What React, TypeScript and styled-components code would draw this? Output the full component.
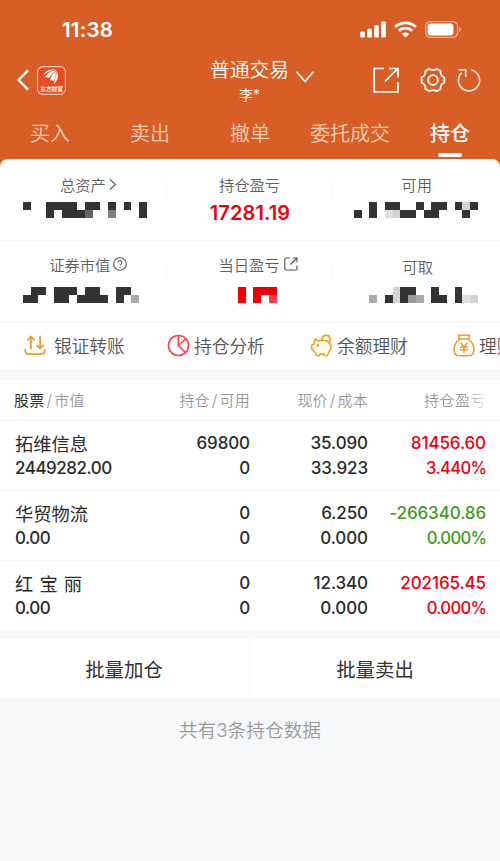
import React from 'react';
import styled, { createGlobalStyle, css } from 'styled-components';

const GlobalStyle = createGlobalStyle`
  * { box-sizing: border-box; }
  body {
    margin: 0;
    background: #f7f8fa;
    font-family: Inter, "Noto Sans CJK SC", sans-serif;
    color: #333;
    -webkit-font-smoothing: antialiased;
  }
  svg { display: block; flex: none; }
`;

const Screen = styled.div`
  width: 500px;
  height: 861px;
  overflow: hidden;
  background: #f7f8fa;
  white-space: nowrap;
`;

const Header = styled.header`
  height: 167px;
  background: #d75f27;
  color: #fff;
`;

const StatusBar = styled.div`
  height: 60px;
  padding: 0 38px 0 62px;
  display: flex;
  align-items: center;
  justify-content: space-between;
`;

const Clock = styled.span`
  font-size: 20.5px;
  font-weight: 600;
  line-height: 24px;
  letter-spacing: 0.2px;
`;

const StatusIcons = styled.div`
  display: flex;
  align-items: center;
  gap: 8px;
  padding-bottom: 1.5px;
`;

const NavBar = styled.div`
  height: 48px;
  display: grid;
  grid-template-columns: 200px 1fr 130px;
`;

const NavLeft = styled.div`
  display: flex;
  align-items: center;
  gap: 8px;
  padding: 0 0 8px 16px;
`;

const NavTitle = styled.div`
  display: flex;
  flex-direction: column;
  padding-left: 10px;
`;

const TitleLine = styled.div`
  display: flex;
  align-items: center;
  gap: 7px;
  height: 23px;
  line-height: 23px;
  padding-bottom: 3px;
  font-size: 19.8px;
  font-weight: 350;
`;

const ChevronSlot = styled.span`
  padding-top: 14px;
`;

const Account = styled.span`
  width: 79px;
  text-align: center;
  font-size: 14px;
  line-height: 24px;
  font-weight: 350;
`;

const NavActions = styled.div`
  display: flex;
  align-items: center;
  padding: 0 0 8px 3px;
`;

const Tabs = styled.nav`
  display: grid;
  grid-template-columns: repeat(5, 100px);
`;

const Tab = styled.div<{ $active?: boolean }>`
  display: flex;
  flex-direction: column;
  align-items: center;
  height: 49px;
  padding-top: 10.5px;
  font-size: 20px;
  line-height: 31px;
  font-weight: ${p => (p.$active ? 500 : 350)};
  color: ${p => (p.$active ? '#fff' : '#f8cdb4')};
  &::after {
    content: '';
    width: 24px;
    height: 3.5px;
    margin-top: 3.5px;
    border-radius: 2px;
    background: ${p => (p.$active ? '#fff' : 'transparent')};
  }
`;

const Summary = styled.section`
  margin-top: -8px;
  height: 210px;
  background: #fff;
  border-radius: 8px 8px 0 0;
`;

const StatRow = styled.div`
  display: grid;
  grid-template-columns: repeat(3, 1fr);
  height: 82px;
  border-bottom: 1px solid #f5f5f5;
`;

const Stat = styled.div<{ $top: number }>`
  display: flex;
  flex-direction: column;
  align-items: center;
  padding-top: ${p => p.$top}px;
  background: linear-gradient(#f7f7f7, #f7f7f7) right 24px / 1px 14px no-repeat;
  &:last-child { background: none; }
`;

const StatLabel = styled.div<{ $shift?: number }>`
  display: flex;
  align-items: center;
  height: 24px;
  margin-left: ${p => p.$shift ?? 0}px;
  font-size: 15.3px;
  font-weight: 350;
  color: #606060;
`;

const LabelIcon = styled.span<{ $w: number; $gap?: number }>`
  width: ${p => p.$w}px;
  margin-left: ${p => p.$gap ?? 3}px;
  margin-right: -${p => p.$w + (p.$gap ?? 3)}px;
`;

const StatValue = styled.div`
  margin-top: 5px;
  font-size: 20px;
  line-height: 24px;
  font-weight: 600;
  letter-spacing: 0.1px;
  color: #ee0010;
`;

const MaskSlot = styled.div<{ $top: number; $shift?: number }>`
  margin-top: ${p => p.$top}px;
  margin-left: ${p => p.$shift ?? 0}px;
`;

const Shortcuts = styled.div`
  display: grid;
  grid-template-columns: repeat(4, 143px);
  height: 46px;
  padding: 0 0 2px 24px;
  overflow: hidden;
`;

const Shortcut = styled.div<{ $gap: number }>`
  display: flex;
  align-items: center;
  gap: ${p => p.$gap}px;
  font-size: 17.7px;
  font-weight: 350;
  color: #555;
`;

const Holdings = styled.section`
  margin-top: 11px;
  background: #fff;
`;

const cols = css`
  display: grid;
  grid-template-columns: 150px 85px 118px 118px;
  padding: 0 14px 0 15px;
`;

const TableHead = styled.div`
  ${cols}
  height: 41px;
  line-height: 40px;
  font-size: 15px;
  font-weight: 350;
  color: #999;
  border-bottom: 1px solid #f5f5f5;
`;

const HeadCell = styled.span<{ $left?: boolean; $fade?: boolean }>`
  text-align: ${p => (p.$left ? 'left' : 'right')};
  margin-left: ${p => (p.$left ? -1 : 0)}px;
  letter-spacing: 0.2px;
  ${p =>
    p.$fade &&
    css`
      padding-top: 1px;
      letter-spacing: 0.5px;
      mask-image: linear-gradient(90deg, #000 84%, transparent 103%);
    `}
  b { font-weight: 400; color: #333; }
  i { font-style: normal; padding: 0 2px; font-size: 16px; }
`;

const HoldingRow = styled.div`
  ${cols}
  height: 70px;
  padding-top: 10px;
  border-bottom: 1px solid #f7f7f7;
  &:last-child { border-bottom: 0; height: 69px; }
`;

const Cell = styled.div<{ $tone?: 'up' | 'down'; $left?: boolean }>`
  text-align: ${p => (p.$left ? 'left' : 'right')};
  font-size: 17px;
  font-weight: 500;
  line-height: 24.5px;
  letter-spacing: -0.1px;
  color: ${p => (p.$tone === 'up' ? '#ee0010' : p.$tone === 'down' ? '#3f9b24' : '#2b2b2b')};
`;

const Line = styled.div`
  height: 24.5px;
`;

const MarketValue = styled(Line)`
  letter-spacing: -0.48px;
`;

const Percent = styled(Line)`
  font-size: 16.6px;
  letter-spacing: -0.6px;
  margin-right: -0.5px;
`;

const StockName = styled(Line)`
  font-size: 18.3px;
  font-weight: 400;
  line-height: 27px;
  letter-spacing: 0;
  word-spacing: 1px;
  white-space: pre;
`;

const Batch = styled.div`
  display: grid;
  grid-template-columns: 1fr 1fr;
  gap: 2px;
  margin-top: 9px;
`;

const BatchButton = styled.div`
  height: 59px;
  padding-right: 1px;
  background: #fff;
  text-align: center;
  font-size: 19.4px;
  line-height: 62px;
  color: #333;
`;

const Footer = styled.p`
  margin: 0;
  padding-top: 19px;
  text-align: center;
  font-size: 18.7px;
  line-height: 28px;
  font-weight: 350;
  color: #999;
`;

const shades: Record<string, string> = {
  '#': '#333', m: '#666', g: '#808080', h: '#999', a: '#aaa',
  d: '#d3d3d3', e: '#e0e0e0', R: '#ec000c', r: '#f4404a',
};

const CELL_W = 7.74;
const CELL_H = 7.8;

function Mask({ rows }: { rows: string[] }) {
  const n = Math.max(...rows.map(r => r.length));
  return (
    <svg width={n * CELL_W} height={CELL_H * 2} shapeRendering="crispEdges">
      {rows.flatMap((row, y) =>
        [...row].map((c, x) =>
          c === ' ' ? null : (
            <rect key={`${x}-${y}`} x={x * CELL_W} y={y * CELL_H} width={CELL_W} height={CELL_H} fill={shades[c]} />
          ),
        ),
      )}
    </svg>
  );
}

const Signal = () => (
  <svg width="26" height="17" viewBox="0 0 26 17" fill="#fff">
    <rect x="0.2" y="10.5" width="4.600" height="6" rx="1.2" />
    <rect x="7.200" y="7.7" width="4.600" height="8.8" rx="1.2" />
    <rect x="14.200" y="4.2" width="4.600" height="12.3" rx="1.2" />
    <rect x="21.200" y="0.5" width="4.600" height="16" rx="1.2" />
  </svg>
);

const Wifi = () => (
  <svg width="23" height="17" viewBox="0 0 23 17" fill="none" stroke="#fff" strokeWidth="2.8">
    <path d="M1.2 6.1a14.8 14.8 0 0 1 20.6 0" />
    <path d="M4.8 9.8a9.6 9.6 0 0 1 13.4 0" />
    <path d="M11.5 16.5 7.9 13a5.2 5.2 0 0 1 7.2 0z" fill="#fff" stroke="none" />
  </svg>
);

const Battery = () => (
  <svg width="37" height="17" viewBox="0 0 37 17">
    <rect x="0.6" y="0.6" width="32" height="15.8" rx="4.8" fill="none" stroke="#e9ad8e" strokeWidth="1.2" />
    <rect x="2.6" y="2.6" width="25.8" height="11.8" rx="3" fill="#fff" />
    <path d="M34.4 6v5c2.2-.6 2.2-4.400 0-5z" fill="#e9ad8e" />
  </svg>
);

const Back = () => (
  <svg width="13" height="22" viewBox="0 0 13 22" fill="none" stroke="#fff" strokeWidth="2.4">
    <path d="M12 1.300 2.600 11 12 20.700" />
  </svg>
);

const Logo = () => (
  <svg width="29" height="29" viewBox="0 0 29 29">
    <rect x="0.600" y="0.600" width="27.800" height="27.800" rx="5.500" fill="#ec4a22" stroke="#f6cdb9" strokeWidth="1.100" />
    <g fill="#fff">
      <path d="M6.500 9.500C7.500 4.800 13 3.300 19 3.600 13.500 4.500 9.700 6.300 6.500 9.500z" />
      <path d="M8.200 11.300C11 6.500 15.500 4 19.800 4.300 17.500 5.800 14.500 8.300 12.200 12.100 11 11 9.700 11 8.200 11.300z" />
      <path d="M13 14.500C14 10 16.800 6.300 20 5.200 18.800 8 18 11.200 17.200 15.300 16 14.200 14.500 14 13 14.500z" />
      <path d="M17 18C17.800 13.500 18.800 8 20.500 6 21.600 10 20.500 14.500 17 18z" />
    </g>
    <text x="14.500" y="24.700" textAnchor="middle" fontSize="5.700" fontWeight="700" fill="#fff" fontFamily="Noto Sans CJK SC, sans-serif">
      东方财富
    </text>
  </svg>
);

const ChevronDown = () => (
  <svg width="18" height="12" viewBox="0 0 18 12" fill="none" stroke="#fff" strokeWidth="1.600">
    <path d="M0.600 0.800 9 10.500 17.400 0.800" />
  </svg>
);

const OpenOut = () => (
  <svg width="26" height="26" viewBox="0 0 26 26" fill="none" stroke="#fff" strokeWidth="1.700">
    <path d="M11 1.500H1.200v23.400H25V15" />
    <path d="M16 1.500h9v9M24.700 1.700 12 14.500" />
  </svg>
);

const Gear = () => (
  <svg width="26" height="26" viewBox="0 0 26 26" fill="none" stroke="#fff" strokeWidth="1.800" strokeLinejoin="round">
    <path d="M9.400 1.700c1.300 1.700 5.900 1.700 7.200 0l4 2.300c-.8 2.100 1.500 6 3.800 6.400v5.200c-2.300.4-4.600 4.300-3.800 6.400l-4 2.300c-1.300-1.700-5.900-1.700-7.200 0l-4-2.300c.8-2.100-1.500-6-3.800-6.400v-5.200c2.300-.4 4.600-4.300 3.800-6.400z" />
    <circle cx="13" cy="13" r="4.800" />
  </svg>
);

const Refresh = () => (
  <svg width="24" height="24" viewBox="0 0 24 24" fill="none" stroke="#fce3d6" strokeWidth="1.600">
    <path d="M14.500 2A10.600 10.600 0 1 1 4.600 4.700" />
    <path d="M1.500 1.900h7.200V9" />
  </svg>
);

const ActionSlot = styled.span<{ $left?: number }>`
  margin-left: ${p => p.$left ?? 0}px;
`;

const ChevronRight = () => (
  <svg width="8" height="13" viewBox="0 0 8 13" fill="none" stroke="#666" strokeWidth="1.200">
    <path d="M1 1.500 6.500 6.500 1 11.500" />
  </svg>
);

const Help = () => (
  <svg width="14" height="14" viewBox="0 0 14 14" fill="none" stroke="#555" strokeWidth="1.100">
    <circle cx="7" cy="7" r="6.300" />
    <path d="M5 5.600a2 2 0 1 1 3.200 1.500C7.300 7.700 7 8 7 8.700M7 9.900v1.100" />
  </svg>
);

const SmallOpen = () => (
  <svg width="14" height="14" viewBox="0 0 14 14" fill="none" stroke="#555" strokeWidth="1.150">
    <path d="M6 1H2.200Q.8 1 .8 2.400v9.200Q.8 13 2.200 13h9.400q1.400 0 1.400-1.400V8.500" />
    <path d="M8.700 1H13v4.300M12.800 1.200 6.500 7.500" />
  </svg>
);

const Transfer = () => (
  <svg width="22" height="21" viewBox="0 0 22 21" fill="none" stroke="#f0982c" strokeWidth="1.700" strokeLinecap="round" strokeLinejoin="round">
    <path d="M3.800 5 6.900 1.400 10 5M6.900 1.800V13.500" />
    <path d="M13 10.200l3.100 3.500 3.100-3.500M16.100 1.400V13.300" />
    <path d="M1.200 14.500c0 3 1 4.700 3.800 4.700h12c2.800 0 3.800-1.700 3.800-4.700" />
  </svg>
);

const Pie = () => (
  <svg width="23" height="23" viewBox="0 0 23 23" fill="none" stroke="#f5484c" strokeWidth="1.600" strokeLinejoin="round">
    <circle cx="11.500" cy="11.500" r="10" />
    <path d="M11.300 1.500v10l7.200 7M11.500 11.500l7.300-6.800" />
  </svg>
);

const Piggy = () => (
  <svg width="23" height="23" viewBox="0 0 23 23" fill="none" stroke="#f3a01c" strokeWidth="1.600" strokeLinecap="round" strokeLinejoin="round">
    <path d="M5 5 8 7C10 6 14.500 5.800 17.500 7.500 21.800 10 21.800 15 18.700 18.200l-1 2.600c-.2.600-.5.900-1.100.9h-1.500l-1.300-1.600h-3.600l-1.200 1.600H7.400c-.6 0-.9-.3-1.100-.9l-.6-2c-1.300-.8-1.900-1.600-2.400-2.800L1.600 14.900v-3.700l2-.9c.5-1.100.5-1.500.7-2.300z" />
    <path d="M12 5.300c.3-5.300 8.300-5.200 8.200.4 0 .9-.3 1.500-.8 2.200" />
    <circle cx="7.800" cy="11.500" r=".6" fill="#f3a01c" />
  </svg>
);

const MoneyBag = () => (
  <svg width="22" height="23" viewBox="0 0 22 23" fill="none" stroke="#f49a25" strokeWidth="1.500" strokeLinecap="round" strokeLinejoin="round">
    <path d="M6.500 5 5.600 1.300h11L15.500 5zM6.700 5.200C3.500 7.500 1 11.500 1 16c0 4.300 2 5.700 5.600 5.700h8.800c3.600 0 5.600-1.400 5.600-5.700 0-4.500-2.500-8.500-5.700-10.800" />
    <path d="M8 9.300l3 3.400 3-3.400M11 12.700v6M7.700 13h6.600M7.700 15.800h6.600" />
  </svg>
);

const holdings = [
  { name: '拓维信息', value: '2449282.00', qty: '69800', usable: '0', price: '35.090', cost: '33.923', pnl: '81456.60', pct: '3.440%', tone: 'up' as const },
  { name: '华贸物流', value: '0.00', qty: '0', usable: '0', price: '6.250', cost: '0.000', pnl: '-266340.86', pct: '0.000%', tone: 'down' as const },
  { name: '红 宝 丽', value: '0.00', qty: '0', usable: '0', price: '12.340', cost: '0.000', pnl: '202165.45', pct: '0.000%', tone: 'up' as const },
];

const shortcuts = [
  { label: '银证转账', icon: <Transfer />, gap: 8 },
  { label: '持仓分析', icon: <Pie />, gap: 4 },
  { label: '余额理财', icon: <Piggy />, gap: 4 },
  { label: '理财', icon: <MoneyBag />, gap: 4 },
];

export default function App() {
  return (
    <Screen>
      <GlobalStyle />
      <Header>
        <StatusBar>
          <Clock>11:38</Clock>
          <StatusIcons><Signal /><Wifi /><Battery /></StatusIcons>
        </StatusBar>
        <NavBar>
          <NavLeft><Back /><Logo /></NavLeft>
          <NavTitle>
            <TitleLine>普通交易<ChevronSlot><ChevronDown /></ChevronSlot></TitleLine>
            <Account>李*</Account>
          </NavTitle>
          <NavActions>
            <ActionSlot><OpenOut /></ActionSlot>
            <ActionSlot $left={21}><Gear /></ActionSlot>
            <ActionSlot $left={11}><Refresh /></ActionSlot>
          </NavActions>
        </NavBar>
        <Tabs>
          {['买入', '卖出', '撤单', '委托成交', '持仓'].map(t => (
            <Tab key={t} $active={t === '持仓'}>{t}</Tab>
          ))}
        </Tabs>
      </Header>
      <Summary>
        <StatRow>
          <Stat $top={13}>
            <StatLabel $shift={-1}>总资产<LabelIcon $w={8}><ChevronRight /></LabelIcon></StatLabel>
            <MaskSlot $top={6} $shift={4}>
              <Mask rows={['#  #### ## # # #', '   # ###m  g   #']} />
            </MaskSlot>
          </Stat>
          <Stat $top={13}>
            <StatLabel $shift={-1}>持仓盈亏</StatLabel>
            <StatValue>17281.19</StatValue>
          </Stat>
          <Stat $top={13}>
            <StatLabel>可用</StatLabel>
            <MaskSlot $top={6} $shift={-2}>
              <Mask rows={['  # ##  # ## #d#', '# # ed## ##   # ']} />
            </MaskSlot>
          </Stat>
        </StatRow>
        <StatRow>
          <Stat $top={11}>
            <StatLabel $shift={-7}>证券市值<LabelIcon $w={14}><Help /></LabelIcon></StatLabel>
            <MaskSlot $top={11} $shift={4}>
              <Mask rows={[' ## ### ##  ##  ', '##  ## #### # a ']} />
            </MaskSlot>
          </Stat>
          <Stat $top={11}>
            <StatLabel $shift={-2}>当日盈亏<LabelIcon $w={14} $gap={4}><SmallOpen /></LabelIcon></StatLabel>
            <MaskSlot $top={11} $shift={15}>
              <Mask rows={['R RRR', 'R R r']} />
            </MaskSlot>
          </Stat>
          <Stat $top={13}>
            <StatLabel $shift={2}>可取</StatLabel>
            <MaskSlot $top={9} $shift={-2}>
              <Mask rows={['     d##  #  #  ', '  a #d#ha ## #ed']} />
            </MaskSlot>
          </Stat>
        </StatRow>
        <Shortcuts>
          {shortcuts.map(s => (
            <Shortcut key={s.label} $gap={s.gap}>{s.icon}{s.label}</Shortcut>
          ))}
        </Shortcuts>
      </Summary>
      <Holdings>
        <TableHead>
          <HeadCell $left><b>股票</b><i>/</i>市值</HeadCell>
          <HeadCell>持仓<i>/</i>可用</HeadCell>
          <HeadCell>现价<i>/</i>成本</HeadCell>
          <HeadCell $fade>持仓盈亏</HeadCell>
        </TableHead>
        {holdings.map(h => (
          <HoldingRow key={h.name}>
            <Cell $left><StockName>{h.name}</StockName><MarketValue>{h.value}</MarketValue></Cell>
            <Cell><Line>{h.qty}</Line><Line>{h.usable}</Line></Cell>
            <Cell><Line>{h.price}</Line><Line>{h.cost}</Line></Cell>
            <Cell $tone={h.tone}><Line>{h.pnl}</Line><Percent>{h.pct}</Percent></Cell>
          </HoldingRow>
        ))}
      </Holdings>
      <Batch>
        <BatchButton>批量加仓</BatchButton>
        <BatchButton>批量卖出</BatchButton>
      </Batch>
      <Footer>共有3条持仓数据</Footer>
    </Screen>
  );
}
